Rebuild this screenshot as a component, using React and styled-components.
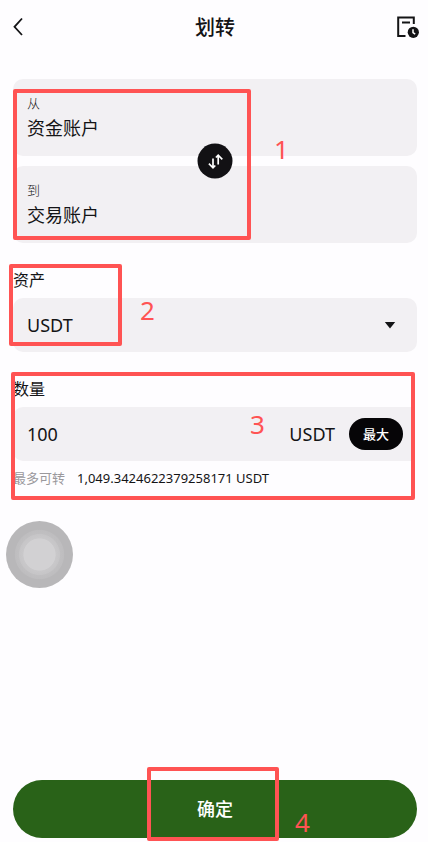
import React, { useState } from 'react';
import styled, { createGlobalStyle } from 'styled-components';

const GlobalStyle = createGlobalStyle`
  * { box-sizing: border-box; }
  body {
    margin: 0;
    background: #fefdff;
    color: #141416;
    font-family: 'Noto Sans', 'Noto Sans CJK SC', sans-serif;
  }
  button, input, select {
    margin: 0;
    padding: 0;
    border: 0;
    background: none;
    color: inherit;
    font: inherit;
  }
  button, select { cursor: pointer; }
`;

const Page = styled.main`
  display: flex;
  flex-direction: column;
  min-height: 100vh;
  padding: 0 11px 4px 13px;
`;

const Header = styled.header`
  display: grid;
  grid-template-columns: 30px 1fr 24px;
  align-items: center;
  height: 54px;
  margin: 0 -2px 25px -8px;

  h1 {
    margin: 0;
    text-align: center;
    font-family: 'Noto Sans CJK SC', sans-serif;
    font-size: 20px;
    line-height: 28px;
    font-weight: 500;
  }
`;

const IconButton = styled.button`
  display: flex;
  align-items: center;
  justify-content: center;
  width: 24px;
  height: 24px;
`;

const Accounts = styled.section`
  position: relative;
  display: flex;
  flex-direction: column;
  gap: 10px;
`;

const AccountCard = styled.button`
  display: block;
  width: 100%;
  height: 77px;
  padding: 0 14px 2px;
  border-radius: 10px;
  background: #f2f0f3;
  text-align: left;
  font-family: 'Noto Sans CJK SC', sans-serif;

  small {
    display: block;
    font-size: 13px;
    line-height: 20px;
    font-weight: 300;
  }
  span {
    display: block;
    font-size: 18px;
    line-height: 28px;
  }
`;

const SwapButton = styled.button`
  position: absolute;
  left: 50%;
  top: 50%;
  transform: translate(-50%, -50%);
  display: flex;
  align-items: center;
  justify-content: center;
  width: 35px;
  height: 35px;
  border-radius: 50%;
  background: #121114;
  color: #fff;
`;

const Field = styled.section`
  position: relative;
  margin-top: 25px;

  label {
    display: block;
    height: 30px;
    font-family: 'Noto Sans CJK SC', sans-serif;
    font-size: 16px;
    line-height: 22px;
  }
`;

const Control = styled.div`
  display: flex;
  align-items: center;
  height: 54px;
  padding: 0 14px;
  border-radius: 10px;
  background: #f2f0f3;
  font-size: 18px;

  svg { pointer-events: none; margin-right: 7px; }
`;

const AmountControl = styled(Control)`
  margin-right: 4px;
  padding-right: 10px;
  gap: 14px;
  border-radius: 10px 0 0 10px;
`;

const AssetSelect = styled.select`
  flex: 1;
  height: 100%;
  margin-right: -21px;
  appearance: none;
  outline: none;
`;

const AmountInput = styled.input`
  flex: 1;
  min-width: 0;
  height: 100%;
  outline: none;
`;

const MaxButton = styled.button`
  width: 54px;
  height: 32px;
  padding-bottom: 2px;
  border-radius: 16px;
  background: #060507;
  color: #fff;
  font-family: 'Noto Sans CJK SC', sans-serif;
  font-size: 13px;
  font-weight: 500;
`;

const Available = styled.p`
  display: flex;
  align-items: center;
  gap: 12px;
  height: 20px;
  margin: 7px 0 0;
  font-size: 13px;
  line-height: 20px;

  span { color: #9a989c; }
`;

const Footer = styled.footer`
  position: relative;
  margin-top: auto;
`;

const ConfirmButton = styled.button`
  display: block;
  width: 100%;
  height: 58px;
  padding-bottom: 2px;
  border-radius: 29px;
  background: #296218;
  color: #fff;
  font-family: 'Noto Sans CJK SC', sans-serif;
  font-size: 18px;
  font-weight: 500;
`;

// выноски инструкции поверх формы
const Frame = styled.div`
  position: absolute;
  z-index: 2;
  border: 4px solid #ff5353;
  border-radius: 2px;
  pointer-events: none;
`;

const AccountsFrame = styled(Frame)`
  left: 0;
  top: 10px;
  bottom: 3px;
  width: 238px;
`;

const AssetFrame = styled(Frame)`
  left: -4px;
  top: -4px;
  bottom: 6px;
  width: 113px;
`;

const AmountFrame = styled(Frame)`
  left: -2px;
  right: 2px;
  top: -5px;
  bottom: -12px;
`;

const ConfirmFrame = styled(Frame)`
  left: 50%;
  top: -13px;
  bottom: -3px;
  width: 132px;
  margin-left: -68px;
`;

const Step = styled.span`
  position: absolute;
  z-index: 2;
  left: ${({ $left }) => $left}px;
  top: ${({ $top }) => $top}px;
  color: #ff5353;
  font-size: 26px;
  line-height: 28px;
  pointer-events: none;
`;

const FloatingBall = styled.div`
  position: fixed;
  left: 6px;
  top: 521px;
  width: 67px;
  height: 67px;
  border-radius: 50%;
  background: radial-gradient(circle closest-side, #d2d1d3 47%, #c9c8ca 49%, #c6c5c7 60%, #c0bfc1 62%, #bebdbf 72%, #b8b7b9 75%);
`;

const BackIcon = () => (
  <svg width="24" height="24" viewBox="0 0 24 24" fill="none" stroke="currentColor" strokeWidth="1.8">
    <path d="M17 3.500 9.500 11.800 17 20" />
  </svg>
);

const HistoryIcon = () => (
  <svg width="24" height="24" viewBox="0 0 24 24" fill="none" stroke="currentColor" strokeWidth="2">
    <path d="M10.500 21H3.200V2.600h15.600V9" />
    <path d="M7 7.500h8" />
    <circle cx="18.300" cy="17.300" r="5.600" fill="currentColor" stroke="none" />
    <path d="M18 14.200v3.400l2.200 1.500" stroke="#fff" strokeWidth="1.5" />
  </svg>
);

const SwapIcon = () => (
  <svg width="16" height="16" viewBox="0 0 16 16" fill="none" stroke="currentColor" strokeWidth="1.7">
    <path d="M5.500 5v9.500M1.400 10.200l4.100 4.100L7.800 12" />
    <path d="M10.700 11V1.500M14.800 5.800l-4.100-4.100L8.400 4" />
  </svg>
);

const App = () => {
  const [amount, setAmount] = useState('100');
  const max = '1,049.3424622379258171';

  return (
    <>
      <GlobalStyle />
      <Page>
        <Header>
          <IconButton aria-label="返回"><BackIcon /></IconButton>
          <h1>划转</h1>
          <IconButton aria-label="划转记录"><HistoryIcon /></IconButton>
        </Header>

        <Accounts>
          <AccountCard>
            <small>从</small>
            <span>资金账户</span>
          </AccountCard>
          <AccountCard>
            <small>到</small>
            <span>交易账户</span>
          </AccountCard>
          <SwapButton aria-label="互换账户"><SwapIcon /></SwapButton>
          <AccountsFrame />
          <Step $left={261} $top={56}>1</Step>
        </Accounts>

        <Field>
          <label htmlFor="asset">资产</label>
          <Control>
            <AssetSelect id="asset" defaultValue="USDT">
              <option>USDT</option>
            </AssetSelect>
            <svg width="12" height="8" viewBox="0 0 12 8" fill="currentColor">
              <path d="M.8 1h10.400L6 7.500z" />
            </svg>
          </Control>
          <AssetFrame />
          <Step $left={127} $top={28}>2</Step>
        </Field>

        <Field>
          <label htmlFor="amount">数量</label>
          <AmountControl>
            <AmountInput id="amount" inputMode="decimal" value={amount} onChange={(e) => setAmount(e.target.value)} />
            <span>USDT</span>
            <MaxButton onClick={() => setAmount(max.replace(',', ''))}>最大</MaxButton>
          </AmountControl>
          <Available><span>最多可转</span>{max} USDT</Available>
          <AmountFrame />
          <Step $left={237} $top={33}>3</Step>
        </Field>

        <Footer>
          <ConfirmButton>确定</ConfirmButton>
          <ConfirmFrame />
          <Step $left={282} $top={28}>4</Step>
        </Footer>
      </Page>
      <FloatingBall />
    </>
  );
};

export default App;
